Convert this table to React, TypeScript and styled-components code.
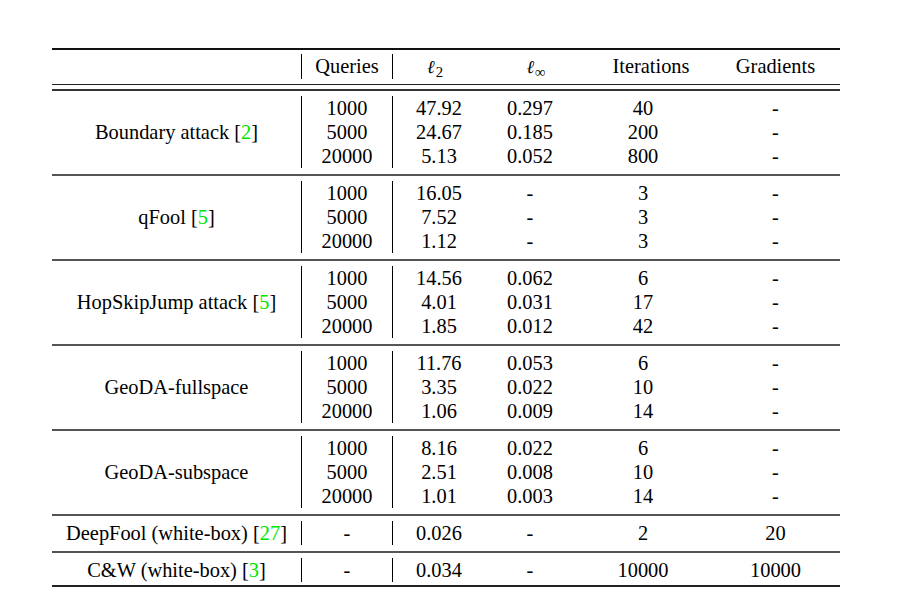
import React from 'react';
import styled, {createGlobalStyle} from 'styled-components';

type RowType = [string, string, string, string, string]

type GroupType = {
    name: string
    cite?: string
    rows: RowType[]
}

const widths = [249, 92, 92, 90, 136, 129]

const groups: GroupType[] = [
    {
        name: 'Boundary attack', cite: '2', rows: [
            ['1000', '47.92', '0.297', '40', '-'],
            ['5000', '24.67', '0.185', '200', '-'],
            ['20000', '5.13', '0.052', '800', '-'],
        ]
    },
    {
        name: 'qFool', cite: '5', rows: [
            ['1000', '16.05', '-', '3', '-'],
            ['5000', '7.52', '-', '3', '-'],
            ['20000', '1.12', '-', '3', '-'],
        ]
    },
    {
        name: 'HopSkipJump attack', cite: '5', rows: [
            ['1000', '14.56', '0.062', '6', '-'],
            ['5000', '4.01', '0.031', '17', '-'],
            ['20000', '1.85', '0.012', '42', '-'],
        ]
    },
    {
        name: 'GeoDA-fullspace', rows: [
            ['1000', '11.76', '0.053', '6', '-'],
            ['5000', '3.35', '0.022', '10', '-'],
            ['20000', '1.06', '0.009', '14', '-'],
        ]
    },
    {
        name: 'GeoDA-subspace', rows: [
            ['1000', '8.16', '0.022', '6', '-'],
            ['5000', '2.51', '0.008', '10', '-'],
            ['20000', '1.01', '0.003', '14', '-'],
        ]
    },
    {
        name: 'DeepFool (white-box)', cite: '27', rows: [
            ['-', '0.026', '-', '2', '20'],
        ]
    },
    {
        name: 'C&W (white-box)', cite: '3', rows: [
            ['-', '0.034', '-', '10000', '10000'],
        ]
    },
]

export default function App() {
    return (
        <>
            <GlobalStyle/>
            <Table>
                <HeaderRow>
                    <HeadCell $w={widths[0]}/>
                    <HeadCell $w={widths[1]} $bar>Queries</HeadCell>
                    <HeadCell $w={widths[2]} $shift={-8}>
                        <Ell>ℓ</Ell><Sub>2</Sub>
                    </HeadCell>
                    <HeadCell $w={widths[3]} $shift={12}>
                        <Ell>ℓ</Ell><Sub>∞</Sub>
                    </HeadCell>
                    <HeadCell $w={widths[4]} $shift={16}>Iterations</HeadCell>
                    <HeadCell $w={widths[5]}>Gradients</HeadCell>
                </HeaderRow>
                <DoubleRule/>
                {groups.map((g, i) => (
                    <Group key={g.name} $last={i === groups.length - 1}>
                        <Label $w={widths[0]}>
                            {g.name}
                            {g.cite && <> [<Cite>{g.cite}</Cite>]</>}
                        </Label>
                        {[0, 1, 2, 3, 4].map(c => (
                            <Column key={c} $w={widths[c + 1]} $bar={c === 0}>
                                {g.rows.map((r, k) => <Value key={k}>{r[c]}</Value>)}
                            </Column>
                        ))}
                    </Group>
                ))}
            </Table>
        </>
    );
}

const GlobalStyle = createGlobalStyle`
  body {
    margin: 0;
    background: #fff;
    color: #000;
    font-family: "Liberation Serif", "Times New Roman", serif;
  }
`

const Table = styled.div`
  margin: 48px 0 0 52px;
  width: 788px;
  border-top: 2px solid #111;
  border-bottom: 2px solid #222;
  font-size: 20.4px;
`

const HeaderRow = styled.div`
  display: flex;
  padding: 4px 0 5px;
`

const HeadCell = styled.div<{ $w: number, $bar?: boolean, $shift?: number }>`
  box-sizing: border-box;
  width: ${props => props.$w}px;
  height: 25px;
  line-height: 25px;
  text-align: center;
  padding-left: ${props => props.$shift && props.$shift > 0 ? props.$shift : 0}px;
  padding-right: ${props => props.$shift && props.$shift < 0 ? -props.$shift : 0}px;
  border-left: ${props => props.$bar ? '1px solid #000' : 'none'};
  border-right: ${props => props.$bar ? '1px solid #000' : 'none'};
`

const Ell = styled.span`
  font-family: "DejaVu Serif", serif;
  font-style: italic;
  font-weight: 300;
  font-size: 0.9em;
`

const Sub = styled.span`
  font-family: "Liberation Serif", "DejaVu Serif", serif;
  font-size: 0.72em;
  position: relative;
  top: 0.3em;
  margin-left: 1px;
`

const DoubleRule = styled.div`
  height: 4px;
  border-top: 1px solid #222;
  border-bottom: 2px solid #333;
`

const Group = styled.div<{ $last?: boolean }>`
  display: flex;
  padding: 5px 0 ${props => props.$last ? 3 : 6}px;
  border-bottom: ${props => props.$last ? 'none' : '2px solid #555'};
`

const Label = styled.div<{ $w: number }>`
  width: ${props => props.$w}px;
  display: flex;
  align-items: center;
  justify-content: center;
  white-space: nowrap;
`

const Cite = styled.span`
  color: #00e600;
`

const Column = styled.div<{ $w: number, $bar?: boolean }>`
  box-sizing: border-box;
  width: ${props => props.$w}px;
  display: flex;
  flex-direction: column;
  border-left: ${props => props.$bar ? '1px solid #000' : 'none'};
  border-right: ${props => props.$bar ? '1px solid #000' : 'none'};
`

const Value = styled.div`
  height: 24px;
  line-height: 24px;
  text-align: center;
`
